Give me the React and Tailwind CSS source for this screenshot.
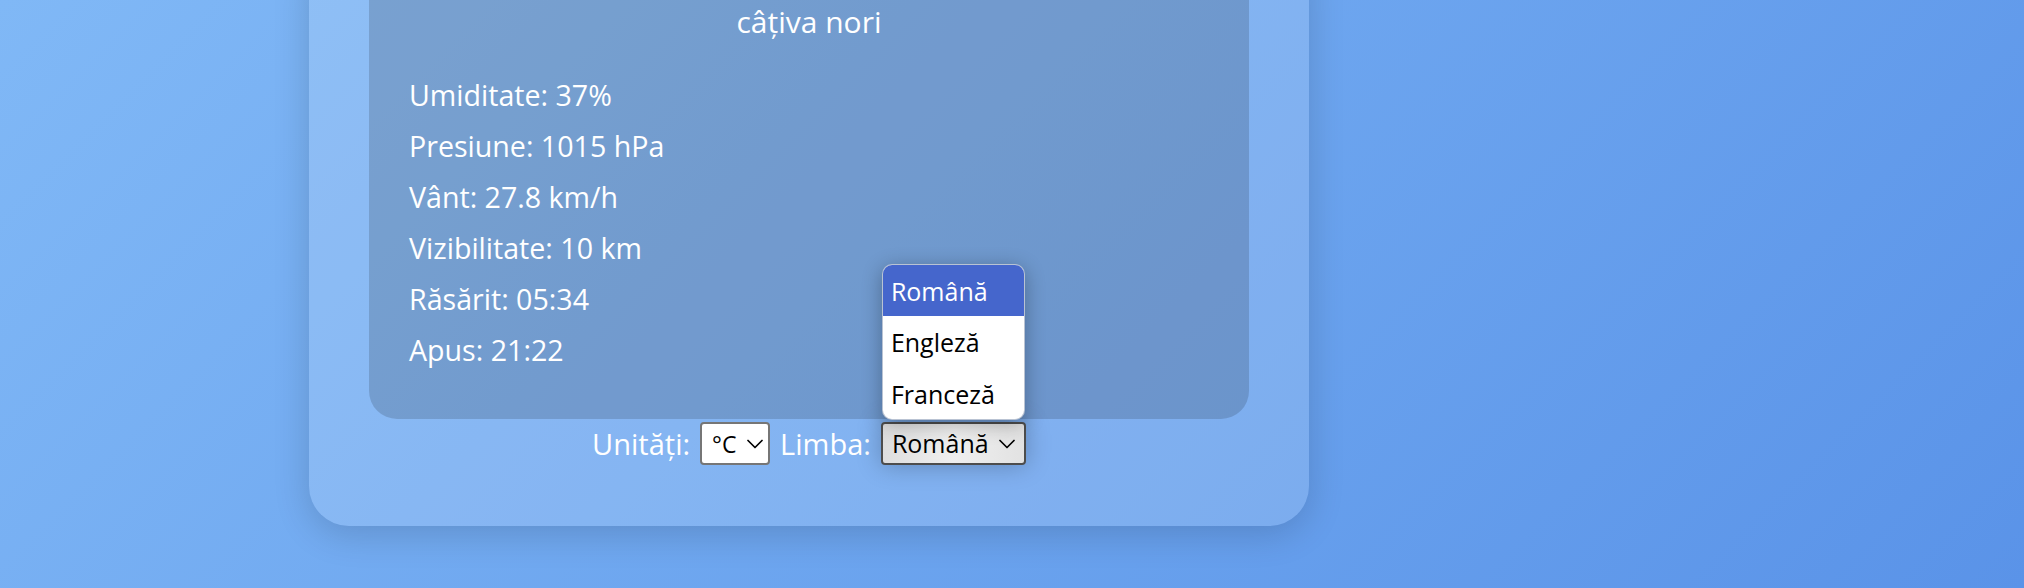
export default function App() {
  const detalii = [
    "Umiditate: 37%",
    "Presiune: 1015 hPa",
    "Vânt: 27.8 km/h",
    "Vizibilitate: 10 km",
    "Răsărit: 05:34",
    "Apus: 21:22",
  ];
  const limbi = ["Română", "Engleză", "Franceză"];

  const Chevron = ({ className }) => (
    <svg viewBox="0 0 16 10" className={className} fill="none" stroke="currentColor" strokeWidth="1.7" strokeLinecap="round" strokeLinejoin="round">
      <path d="M1 1.5 L8 8.5 L15 1.5" />
    </svg>
  );

  return (
    <div className="w-full h-[588px] overflow-hidden bg-[linear-gradient(135deg,#80b8f6,#5a93e8)] font-['Open_Sans',sans-serif] text-white">
      <div className="ml-[309px] w-[1000px] -mt-[60px] pt-[60px] px-[60px] pb-[60px] rounded-[40px] bg-white/15 shadow-[0_8px_36px_rgba(0,0,0,0.16)]">
        {/* panou cu detaliile vremii */}
        <div className="rounded-b-[28px] bg-black/15 pt-[2px] pb-[44px] pl-[40px] pr-[40px]">
          <h2 className="text-center text-[30px] leading-[40px] font-normal">câțiva nori</h2>
          <div className="mt-[27px]">
            {detalii.map((d) => (
              <p key={d} className="text-[28.6px] leading-[51px]">{d}</p>
            ))}
          </div>
        </div>

        <div className="mt-[3px] flex items-center justify-center gap-[10px] text-[29px]">
          <span>Unități:</span>
          <div className="flex items-center h-[43px] w-[70px] pl-[10px] gap-[11px] rounded-[4px] border-2 border-[#767676] bg-white text-black text-[23px]">
            <span>°C</span>
            <Chevron className="w-[16px] h-[10px]" />
          </div>
          <span>Limba:</span>
          <div className="relative">
            <div className="flex items-center justify-between h-[43px] w-[145px] pl-[9px] pr-[9px] rounded-[4px] border-2 border-[#4d4d4d] bg-[linear-gradient(90deg,#dedede,#efefef_50%,#e2e2e2)] text-black text-[25px] shadow-[0_0_24px_rgba(0,0,0,0.25)]">
              <span>Română</span>
              <Chevron className="w-[16px] h-[10px]" />
            </div>
            {/* lista deschisa a selectului */}
            <div className="absolute left-[1px] bottom-[45px] w-[143px] overflow-hidden rounded-[10px] border border-[#8a9bb5]/60 bg-white shadow-[0_4px_20px_rgba(0,0,0,0.3)]">
              {limbi.map((l, i) => (
                <div
                  key={l}
                  className={`h-[51.5px] flex items-center pl-[8px] pt-[2px] text-[25px] ${
                    i === 0 ? "bg-[#4566cc] text-white" : "text-black"
                  }`}
                >
                  {l}
                </div>
              ))}
            </div>
          </div>
        </div>
      </div>
    </div>
  );
}
